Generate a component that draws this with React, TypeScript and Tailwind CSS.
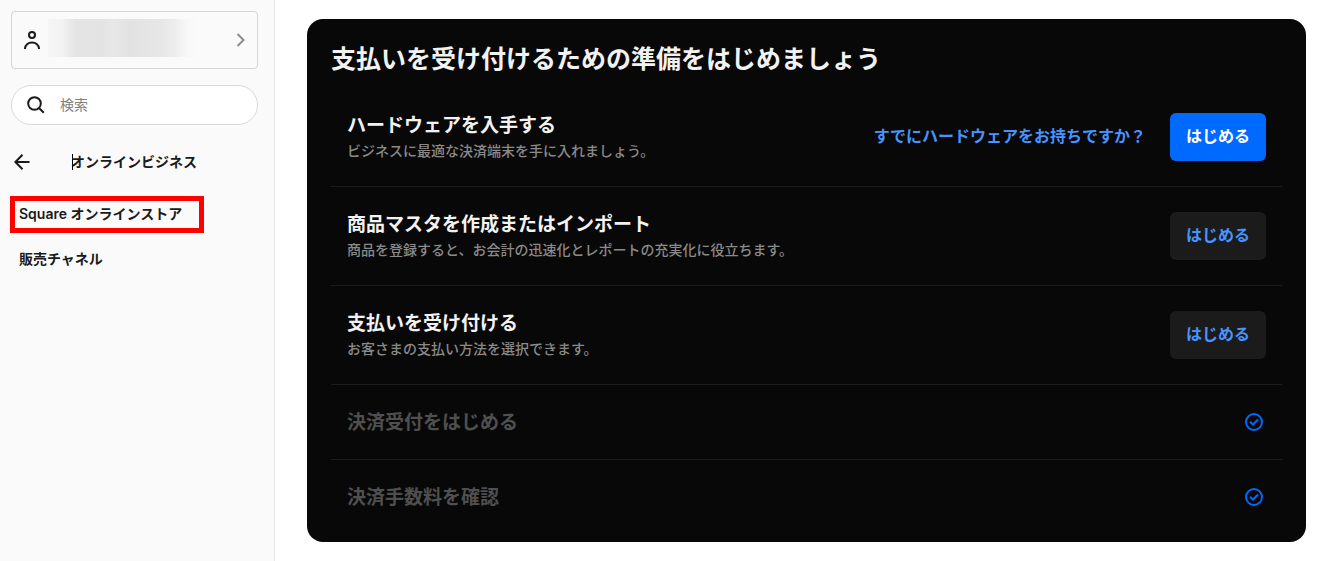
import React from 'react'

type Step = {
    title: string
    description?: string
    link?: string
    primary?: boolean
    done?: boolean
}

const steps: Step[] = [
    {
        title: 'ハードウェアを入手する',
        description: 'ビジネスに最適な決済端末を手に入れましょう。',
        link: 'すでにハードウェアをお持ちですか？',
        primary: true,
    },
    {
        title: '商品マスタを作成またはインポート',
        description: '商品を登録すると、お会計の迅速化とレポートの充実化に役立ちます。',
    },
    {
        title: '支払いを受け付ける',
        description: 'お客さまの支払い方法を選択できます。',
    },
    { title: '決済受付をはじめる', done: true },
    { title: '決済手数料を確認', done: true },
]

function CheckIcon() {
    return (
        <svg className="mr-[3px] h-[18px] w-[18px] shrink-0 text-[#006aff]" viewBox="0 0 18 18" fill="none" stroke="currentColor" strokeWidth="2" role="img" aria-label="完了">
            <circle cx="9" cy="9" r="8" />
            <path d="M5 8.700 8 11.500 13 6.500" />
        </svg>
    )
}

function Sidebar() {
    return (
        <aside className="flex w-[275px] shrink-0 flex-col border-r border-[#e6e6e6] bg-[#fafafa] px-[10px] pt-[11px] text-sm text-[#1a1a1a]">
            <button type="button" aria-label="アカウント" className="ml-px mr-1.5 flex h-[58px] items-center rounded border border-[#d5d5d5] pl-3 pr-3">
                <svg className="h-[18px] w-4 shrink-0" viewBox="0 0 16 18" fill="none" stroke="currentColor" strokeWidth="2">
                    <circle cx="8" cy="4" r="3" />
                    <path d="M1 18v-.4C1 14 4.2 11.500 8 11.500s7 2.500 7 6.100v.4" />
                </svg>
                <span className="mb-1 ml-2 h-[38px] w-[150px] bg-[linear-gradient(90deg,#f6f6f6_0%,#f2f2f2_10%,#e4e4e4_18%,#e3e3e3_36%,#e8e8e8_42%,#e2e2e2_54%,#e6e6e6_74%,#eeeeee_85%,#f8f8f8_93%,#fafafa_100%)]"></span>
                <svg className="ml-auto h-[14px] w-[9px] shrink-0 text-[#8c8c8c]" viewBox="0 0 9 14" fill="none" stroke="currentColor" strokeWidth="2">
                    <path d="M1.500 1 7.500 7 1.500 13" />
                </svg>
            </button>

            <label className="ml-px mr-1.5 mt-4 flex h-10 items-center rounded-full border border-[#d9d9d9] bg-white pl-[15px] pr-4">
                <svg className="h-[18px] w-[18px] shrink-0" viewBox="0 0 18 18" fill="none" stroke="currentColor" strokeWidth="2">
                    <circle cx="7.500" cy="7.500" r="6.300" />
                    <path d="m12 12 4.800 4.800" />
                </svg>
                <input type="search" placeholder="検索" aria-label="検索" className="ml-[15px] w-full min-w-0 bg-transparent outline-none placeholder:text-[#808080]" />
            </label>

            <div className="mt-[27px] flex h-5 items-center font-semibold">
                <button type="button" aria-label="戻る" className="ml-1 w-4">
                    <svg className="h-4 w-4" viewBox="0 0 16 16" fill="none" stroke="currentColor" strokeWidth="2">
                        <path d="M8.500.8 1.400 8l7.100 7.200M1.400 8H15.500" />
                    </svg>
                </button>
                <span className="ml-[42px] h-4 w-px bg-black"></span>
                <h2 className="-ml-0.5">オンラインビジネス</h2>
            </div>

            <nav className="mt-6 flex flex-col items-start font-semibold">
                <a href="#" className="flex h-[37px] w-[194px] items-center border-5 border-[#ff0000] pb-0.5 pl-1">Square オンラインストア</a>
                <a href="#" className="mt-2 flex h-9 items-center pl-[9px]">販売チャネル</a>
            </nav>
        </aside>
    )
}

function StepRow({ step }: { step: Step }) {
    return (
        <li className="flex items-center border-b border-[#1c1c1c] px-4 py-6 last:border-b-0">
            <div>
                <h3 className={`pt-0.5 text-[19px] leading-6 font-bold ${step.done ? 'text-[#4f4f4f]' : 'text-[#f2f2f2]'}`}>{step.title}</h3>
                {step.description && <p className="pt-0.5 text-sm leading-[22px] font-medium text-[#8a8a8a]">{step.description}</p>}
            </div>
            <div className="ml-auto flex shrink-0 items-center">
                {step.link && <a href="#" className="mr-6 pb-0.5 font-semibold text-[#4793ff]">{step.link}</a>}
                {step.done ? (
                    <CheckIcon />
                ) : (
                    <button type="button" className={`h-12 rounded-md px-4 pb-0.5 font-semibold ${step.primary ? 'bg-[#006aff] text-white' : 'bg-[#1b1b1b] text-[#4793ff]'}`}>
                        はじめる
                    </button>
                )}
            </div>
        </li>
    )
}

export default function App() {
    return (
        <div className="flex min-h-screen bg-white font-[Inter,'Noto_Sans_CJK_JP',sans-serif]">
            <Sidebar />
            <main className="min-w-0 flex-1 pt-[19px] pr-[17px] pb-[19px] pl-8">
                <section className="rounded-2xl bg-[#080808] px-6 pt-6 pb-2">
                    <h1 className="mb-[13px] text-[25px] leading-8 font-bold text-[#f2f2f2]">支払いを受け付けるための準備をはじめましょう</h1>
                    <ul>
                        {steps.map((step) => (
                            <StepRow key={step.title} step={step} />
                        ))}
                    </ul>
                </section>
            </main>
        </div>
    )
}
